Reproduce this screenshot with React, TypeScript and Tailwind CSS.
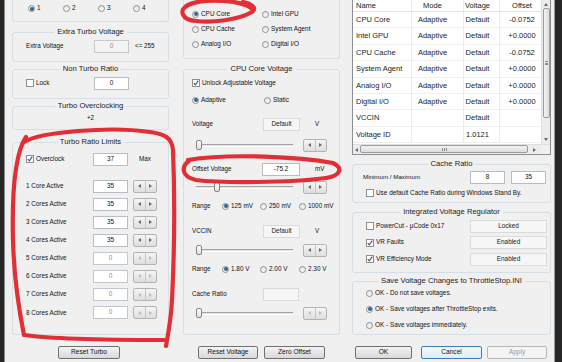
import React from "react";

type RP = { checked?: boolean; label?: string };
const Radio = ({ checked = false, label }: RP) => (
  <div className="flex items-center">
    <span className="w-[7px] h-[7px] rounded-full border border-[#8e8f8f] bg-linear-to-b from-[#e4e4e4] to-[#fafafa] flex items-center justify-center shrink-0">
      {checked && <span className="w-[4px] h-[4px] rounded-full bg-[#2a6a9a]" />}
    </span>
    {label && <span className="ml-[2px] text-[6.4px] leading-none whitespace-nowrap">{label}</span>}
  </div>
);

const Check = ({ checked = false, label }: RP) => (
  <div className="flex items-center">
    <span className="w-[8px] h-[8px] border border-[#8e8f8f] bg-white flex items-center justify-center shrink-0">
      {checked && (
        <svg width="6" height="6" viewBox="0 0 6 6">
          <path d="M0.8 3 L2.3 4.8 L5.3 0.6" stroke="#3b4f8c" strokeWidth="1.1" fill="none" />
        </svg>
      )}
    </span>
    <span className="ml-[2px] text-[6.4px] leading-none whitespace-nowrap">{label}</span>
  </div>
);

type FP = { value?: string; w: string; kind?: "normal" | "dim" | "disabled" | "static" };
const Field = ({ value = "", w, kind = "normal" }: FP) => {
  const base = "h-[13px] flex items-center justify-center text-[6.4px] leading-none shrink-0 " + w + " ";
  const style =
    kind === "normal"
      ? "bg-white border border-[#b9bcc2] text-[#111]"
      : kind === "dim"
      ? "bg-white border border-[#c3c6cb] text-[#8c8c8c]"
      : kind === "disabled"
      ? "bg-[#f4f4f4] border border-[#c9c9c9] text-[#8c8c8c]"
      : "bg-[#f6f6f6] border border-[#dadada] text-[#222]";
  return <div className={base + style}>{value}</div>;
};

const Arrow = ({ dir, dim = false }: { dir: "l" | "r" | "u" | "d"; dim?: boolean }) => {
  const c = dim ? "#bdbdbd" : "#6a6a6a";
  const d =
    dir === "l" ? "M3 0 L0 2 L3 4Z" : dir === "r" ? "M0 0 L3 2 L0 4Z" : dir === "u" ? "M0 3 L2 0 L4 3Z" : "M0 0 L4 0 L2 3Z";
  const s = dir === "l" || dir === "r" ? { w: 3, h: 4 } : { w: 4, h: 3 };
  return (
    <svg width={s.w} height={s.h} viewBox={`0 0 ${s.w} ${s.h}`}>
      <path d={d} fill={c} />
    </svg>
  );
};

const Spin = ({ dim = false }: { dim?: boolean }) => (
  <div className="w-[24px] h-[13px] flex border border-[#b3b3b3] rounded-[2px] bg-linear-to-b from-[#f5f5f5] to-[#dedede] shrink-0">
    <div className="flex-1 flex items-center justify-center border-r border-[#c6c6c6]">
      <Arrow dir="l" dim={dim} />
    </div>
    <div className="flex-1 flex items-center justify-center">
      <Arrow dir="r" dim={dim} />
    </div>
  </div>
);

const Slider = ({ thumb }: { thumb: string }) => (
  <div className="relative w-[97px] h-[14px] shrink-0">
    <div className="absolute left-0 right-0 top-[6px] h-[3px] border-t border-[#a3a3a3] border-b border-b-white bg-[#e4e4e4]" />
    <div className={"absolute top-[2px] w-[6px] h-[10px] rounded-[2px] border border-[#858585] bg-linear-to-b from-white to-[#e0e0e0] " + thumb} />
  </div>
);

type BP = { label: string; w: string; kind?: "normal" | "focus" | "disabled" };
const Btn = ({ label, w, kind = "normal" }: BP) => {
  const style =
    kind === "normal"
      ? "border-[#707070] bg-linear-to-b from-[#f3f3f3] to-[#d9d9d9] text-[#111]"
      : kind === "focus"
      ? "border-[#3c7fb1] bg-linear-to-b from-[#f2f9fd] to-[#dbeefb] text-[#111]"
      : "border-[#b5b7b9] bg-[#f4f4f4] text-[#9a9a9a]";
  return (
    <div className={"h-[13px] border rounded-[2px] flex items-center justify-center text-[6.6px] leading-none shrink-0 " + w + " " + style}>
      {label}
    </div>
  );
};

const Group = ({ title, className, children }: { title: string; className: string; children?: React.ReactNode }) => (
  <fieldset className={"border border-[#d5dfe5] rounded-[3px] min-w-0 " + className}>
    <legend className="mx-auto px-[3px] text-[7.6px] leading-[10px] text-[#1b1b1b] whitespace-nowrap">{title}</legend>
    {children}
  </fieldset>
);

const Row = ({ className, children }: { className: string; children?: React.ReactNode }) => (
  <div className={"h-[14px] flex items-center " + className}>{children}</div>
);

const lbl = "text-[6.3px] leading-none whitespace-nowrap";

const cores = [
  { n: "1 Core Active", v: "35", dim: false },
  { n: "2 Cores Active", v: "35", dim: false },
  { n: "3 Cores Active", v: "35", dim: false },
  { n: "4 Cores Active", v: "35", dim: false },
  { n: "5 Cores Active", v: "0", dim: true },
  { n: "6 Cores Active", v: "0", dim: true },
  { n: "7 Cores Active", v: "0", dim: true },
  { n: "8 Cores Active", v: "0", dim: true },
];

const rows = [
  ["CPU Core", "Adaptive", "Default", "-0.0752"],
  ["Intel GPU", "Adaptive", "Default", "+0.0000"],
  ["CPU Cache", "Adaptive", "Default", "-0.0752"],
  ["System Agent", "Adaptive", "Default", "+0.0000"],
  ["Analog I/O", "Adaptive", "Default", "+0.0000"],
  ["Digital I/O", "Adaptive", "Default", "+0.0000"],
  ["VCCIN", "", "Default", ""],
  ["Voltage ID", "", "1.0121", ""],
];

const LeftCol = () => (
  <div className="w-[157px] flex flex-col shrink-0">
    <div className="h-[22px] border border-t-0 border-[#d5dfe5] rounded-b-[3px] flex items-start pt-[5px] pl-[15px]">
      {["1", "2", "3", "4"].map((n, i) => (
        <div key={n} className="w-[35px]">
          <Radio checked={i === 0} label={n} />
        </div>
      ))}
    </div>
    <Group title="Extra Turbo Voltage" className="mt-[5px] h-[35px]">
      <Row className="mt-[2px] pl-[13px]">
        <span className={lbl + " w-[68px]"}>Extra Voltage</span>
        <Field w="w-[35px]" value="0" kind="disabled" />
        <span className={lbl + " ml-[6px]"}>&lt;= 255</span>
      </Row>
    </Group>
    <Group title="Non Turbo Ratio" className="mt-[2px] h-[35px]">
      <Row className="mt-[2px] pl-[13px]">
        <div className="w-[68px]">
          <Check label="Lock" />
        </div>
        <Field w="w-[35px]" value="0" />
      </Row>
    </Group>
    <Group title="Turbo Overclocking" className="mt-[2px] h-[29px]">
      <Row className="justify-center">
        <span className={lbl}>+2</span>
      </Row>
    </Group>
    <Group title="Turbo Ratio Limits" className="mt-[7px] h-[198px]">
      <Row className="mt-[5px] pl-[13px]">
        <div className="w-[67px]">
          <Check checked label="Overclock" />
        </div>
        <Field w="w-[35px]" value="37" />
        <span className={lbl + " ml-[11px]"}>Max</span>
      </Row>
      <div className="mt-[13px] flex flex-col gap-[4.1px] pl-[13px]">
        {cores.map((c) => (
          <Row key={c.n} className="">
            <span className={lbl + " w-[67px]"}>{c.n}</span>
            <Field w="w-[35px]" value={c.v} kind={c.dim ? "dim" : "normal"} />
            <div className="ml-[5px]">
              <Spin dim={c.dim} />
            </div>
          </Row>
        ))}
      </div>
    </Group>
    <div className="mt-[11px] pl-[46px] flex">
      <Btn label="Reset Turbo" w="w-[62px]" />
    </div>
  </div>
);

const MidCol = () => (
  <div className="w-[157px] ml-[14px] flex flex-col shrink-0">
    <div className="h-[59px] border border-t-0 border-[#d5dfe5] rounded-b-[3px] pt-[7px] pl-[8px] flex flex-col gap-[1px]">
      {[
        ["CPU Core", "Intel GPU"],
        ["CPU Cache", "System Agent"],
        ["Analog I/O", "Digital I/O"],
      ].map((r, i) => (
        <div key={r[0]} className="h-[14px] flex items-center">
          <div className="w-[70px]">
            <Radio checked={i === 0} label={r[0]} />
          </div>
          <Radio label={r[1]} />
        </div>
      ))}
    </div>
    <Group title="CPU Core Voltage" className="mt-[5px] h-[271px]">
      <div className="pl-[8px] flex flex-col">
        <Row className="mt-[2px]">
          <Check checked label="Unlock Adjustable Voltage" />
        </Row>
        <Row className="mt-[3px]">
          <div className="w-[72px]">
            <Radio checked label="Adaptive" />
          </div>
          <Radio label="Static" />
        </Row>
        <Row className="mt-[10px]">
          <span className={lbl + " w-[71px]"}>Voltage</span>
          <Field w="w-[37px]" value="Default" kind="static" />
          <span className={lbl + " ml-[15px]"}>V</span>
        </Row>
        <Row className="mt-[7px] pl-[4px]">
          <Slider thumb="left-0" />
          <div className="ml-[10px]">
            <Spin />
          </div>
        </Row>
        <Row className="mt-[10px]">
          <span className={lbl + " w-[70px]"}>Offset Voltage</span>
          <Field w="w-[38px]" value="-75.2" />
          <span className={lbl + " ml-[15px]"}>mV</span>
        </Row>
        <Row className="mt-[4px] pl-[4px]">
          <Slider thumb="left-[18px]" />
          <div className="ml-[10px]">
            <Spin />
          </div>
        </Row>
        <Row className="mt-[5px]">
          <span className={lbl + " w-[30px]"}>Range</span>
          <div className="w-[38px]">
            <Radio checked label="125 mV" />
          </div>
          <div className="w-[39px]">
            <Radio label="250 mV" />
          </div>
          <Radio label="1000 mV" />
        </Row>
        <Row className="mt-[11px]">
          <span className={lbl + " w-[71px]"}>VCCIN</span>
          <Field w="w-[37px]" value="Default" kind="static" />
          <span className={lbl + " ml-[15px]"}>V</span>
        </Row>
        <Row className="mt-[5px] pl-[4px]">
          <Slider thumb="left-0" />
          <div className="ml-[10px]">
            <Spin />
          </div>
        </Row>
        <Row className="mt-[5px]">
          <span className={lbl + " w-[30px]"}>Range</span>
          <div className="w-[38px]">
            <Radio checked label="1.80 V" />
          </div>
          <div className="w-[39px]">
            <Radio label="2.00 V" />
          </div>
          <Radio label="2.30 V" />
        </Row>
        <Row className="mt-[11px]">
          <span className={lbl + " w-[71px]"}>Cache Ratio</span>
          <Field w="w-[36px]" value="" kind="static" />
        </Row>
        <Row className="mt-[5px] pl-[4px]">
          <Slider thumb="left-0" />
          <div className="ml-[10px]">
            <Spin dim />
          </div>
        </Row>
      </div>
    </Group>
    <div className="mt-[11px] pl-[15px] flex gap-[6px]">
      <Btn label="Reset Voltage" w="w-[60px]" />
      <Btn label="Zero Offset" w="w-[61px]" />
    </div>
  </div>
);

const cell = "h-full flex items-center text-[7.5px] leading-none whitespace-nowrap border-r border-[#ececec]";

const Table = () => (
  <div className="h-[155px] border border-t-0 border-[#8b9097] bg-white flex flex-col">
    <div className="h-[144px] flex">
      <div className="w-[188px] flex flex-col">
        <div className="h-[12px] flex border-b border-[#e3e3e3] text-[#222]">
          <div className={cell + " w-[59px] pl-[3px] border-[#e3e3e3]"}>Name</div>
          <div className={cell + " w-[52px] justify-center pr-[10px] border-[#e3e3e3]"}>Mode</div>
          <div className={cell + " w-[36px] justify-center pr-[8px] border-[#e3e3e3]"}>Voltage</div>
          <div className={cell + " w-[41px] justify-center pl-[3px] border-r-0"}>Offset</div>
        </div>
        {rows.map((r) => (
          <div key={r[0]} className="h-[16.4px] flex border-b border-[#efefef] text-[#1c1c1c]">
            <div className={cell + " w-[59px] pl-[3px]"}>{r[0]}</div>
            <div className={cell + " w-[52px] justify-center pr-[10px]"}>{r[1]}</div>
            <div className={cell + " w-[36px] justify-center pr-[8px]"}>{r[2]}</div>
            <div className={cell + " w-[41px] justify-center pl-[3px] border-r-0"}>{r[3]}</div>
          </div>
        ))}
      </div>
      <div className="w-[9px] bg-[#ececec] border-l border-[#e0e0e0] flex flex-col items-center">
        <div className="h-[8px] flex items-center justify-center">
          <Arrow dir="u" />
        </div>
        <div className="w-[7px] h-[110px] rounded-[2px] border border-[#9b9b9b] bg-linear-to-r from-[#f3f3f3] to-[#dcdcdc] flex items-center justify-center">
          <div className="w-[3px] h-[4px] border-y border-[#8a8a8a] flex items-center">
            <div className="w-full h-[1px] bg-[#8a8a8a]" />
          </div>
        </div>
        <div className="flex-1" />
        <div className="h-[9px] flex items-center justify-center">
          <Arrow dir="d" />
        </div>
      </div>
    </div>
    <div className="h-[10px] flex bg-[#ececec] border-t border-[#e0e0e0]">
      <div className="w-[7px] flex items-center justify-center">
        <Arrow dir="l" />
      </div>
      <div className="w-[168px] h-[8px] mt-[0px] rounded-[2px] border border-[#9b9b9b] bg-linear-to-b from-[#f3f3f3] to-[#dcdcdc] flex items-center justify-center gap-[1px]">
        <div className="w-[1px] h-[3px] bg-[#8a8a8a]" />
        <div className="w-[1px] h-[3px] bg-[#8a8a8a]" />
        <div className="w-[1px] h-[3px] bg-[#8a8a8a]" />
      </div>
      <div className="w-[13px] flex items-center justify-center">
        <Arrow dir="r" />
      </div>
      <div className="flex-1 bg-[#f0f0f0]" />
    </div>
  </div>
);

const RightCol = () => (
  <div className="w-[199px] ml-[12px] flex flex-col shrink-0">
    <Table />
    <Group title="Cache Ratio" className="mt-[4px] h-[44px]">
      <Row className="mt-[1px] pl-[10px] pr-[4px]">
        <span className={"text-[6.2px] leading-none flex-1"}>Minimum / Maximum</span>
        <Field w="w-[35px]" value="8" />
        <div className="ml-[6px]">
          <Field w="w-[35px]" value="35" />
        </div>
      </Row>
      <Row className="mt-[2px] pl-[13px]">
        <Check label="Use default Cache Ratio during Windows Stand By." />
      </Row>
    </Group>
    <Group title="Integrated Voltage Regulator" className="mt-[4px] h-[66px]">
      <div className="pt-[2px] pl-[13px] pr-[3px] flex flex-col gap-[2.5px]">
        {[
          ["PowerCut  -  µCode 0x17", "Locked", false],
          ["VR Faults", "Enabled", true],
          ["VR Efficiency Mode", "Enabled", true],
        ].map((r) => (
          <Row key={r[0] as string} className="">
            <div className="flex-1">
              <Check checked={r[2] as boolean} label={r[0] as string} />
            </div>
            <Field w="w-[77px]" value={r[1] as string} kind="static" />
          </Row>
        ))}
      </div>
    </Group>
    <Group title="Save Voltage Changes to ThrottleStop.INI" className="mt-[3px] h-[59px]">
      <div className="pl-[13px] flex flex-col gap-[2px]">
        <Row className="">
          <Radio label="OK - Do not save voltages." />
        </Row>
        <Row className="">
          <Radio checked label="OK - Save voltages after ThrottleStop exits." />
        </Row>
        <Row className="">
          <Radio label="OK - Save voltages immediately." />
        </Row>
      </div>
    </Group>
    <div className="mt-[11px] pl-[3px] flex">
      <Btn label="OK" w="w-[57px]" />
      <div className="ml-[9px]">
        <Btn label="Cancel" w="w-[61px]" kind="focus" />
      </div>
      <div className="ml-[5px]">
        <Btn label="Apply" w="w-[60px]" kind="disabled" />
      </div>
    </div>
  </div>
);

export default function App() {
  return (
    <div className="relative w-[562px] h-[362px] overflow-hidden bg-[#f0f0f0] flex font-['Liberation_Sans',Arial,sans-serif] text-[#111]">
      <div className="w-[4px] h-full bg-[#262626] shrink-0" />
      <div className="w-[1px] h-full bg-[#8a8a8a] shrink-0" />
      <div className="flex pl-[7px] shrink-0">
        <LeftCol />
        <MidCol />
        <RightCol />
      </div>
      <div className="w-[3px] h-full shrink-0" />
      <div className="w-[1px] h-full bg-[#9a9a9a] shrink-0" />
      <div className="flex-1 h-full bg-[#262626]" />
      <svg className="absolute inset-0 pointer-events-none" width="562" height="362" viewBox="0 0 562 362">
        <g fill="none" stroke="#e1252b" strokeWidth="4.2" strokeLinecap="round" strokeLinejoin="round" opacity="0.95">
          <path d="M252 9 C246 1, 205 -3, 188 5 C178 10, 182 20, 196 21 C212 23, 238 20, 252 12 C258 8, 250 3, 243 2" />
          <path d="M188 160 C230 153, 300 157, 333 163 C344 168, 340 176, 326 178 C290 183, 220 183, 196 180 C182 177, 180 167, 190 160" />
          <path d="M24 142 C40 132, 110 126, 150 132 C165 134, 172 138, 173 150 C175 200, 174 260, 172 300 C171 320, 168 335, 166 346" />
          <path d="M26 137 C14 155, 12 200, 13 240 C14 280, 20 315, 24 335 C60 340, 120 340, 164 340" />
        </g>
      </svg>
    </div>
  );
}
